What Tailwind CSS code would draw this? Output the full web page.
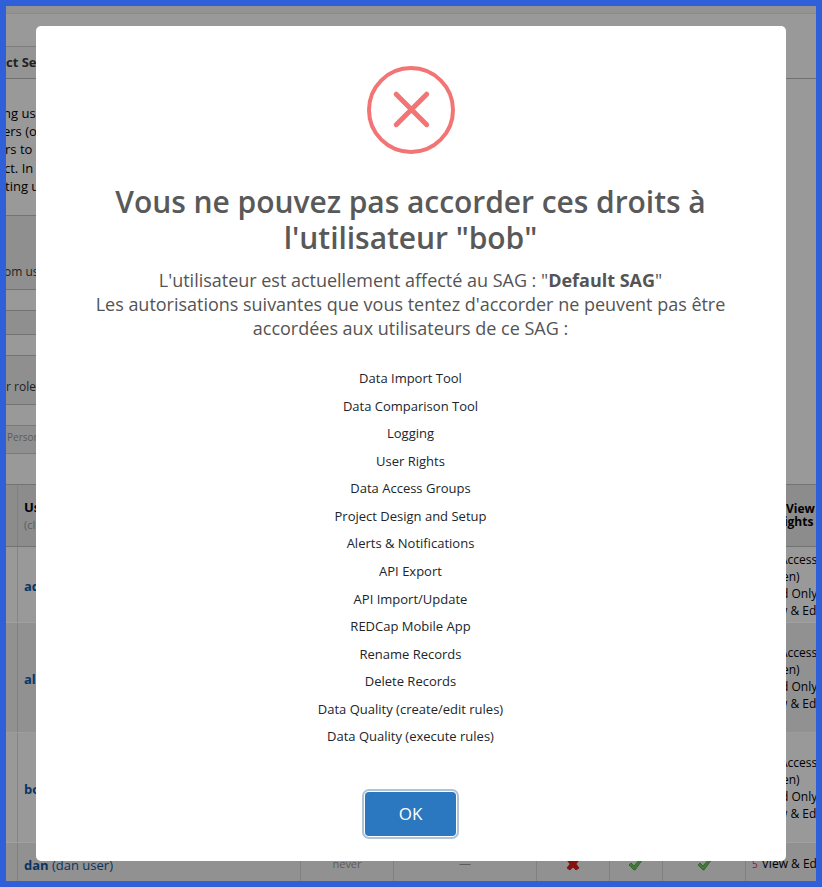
<!DOCTYPE html>
<html lang="fr">
<head>
<meta charset="utf-8">
<title>User Rights</title>
<script src="https://cdn.jsdelivr.net/npm/@tailwindcss/browser@4"></script>
</head>
<body>
<div class="relative h-[887px] w-[822px] overflow-hidden border-6 border-[#2f60d9] bg-[#999999] font-['Open_Sans',sans-serif] text-[13px] text-black">
  <!-- Page behind the dialog -->
  <div class="flex h-[875px] w-[810px] flex-col">
    <div class="h-2 shrink-0 border-b border-[#8b8b8b] bg-[#939393]"></div>
    <div class="flex h-[65px] shrink-0 items-end border-b border-[#707070]">
      <div class="flex h-8 w-40 items-center border-t border-[#7d7d7d] bg-[#949494] font-bold text-[#222]">ct Se</div>
    </div>
    <div class="h-[136px] shrink-0 pt-[25px] leading-[18.2px] whitespace-nowrap">
      <p class="-ml-[3px]">ng use</p><p class="-ml-[3px]">ers (o</p><p class="-ml-px">rs to a</p><p class="-ml-[2px]">ct. In</p><p class="-ml-px">ting u</p>
    </div>
    <div class="flex h-[75px] w-[700px] shrink-0 items-end border-y border-[#737373] bg-[#8f8f8f] pb-[9px] text-[12px] leading-4 text-[#222]"><span class="-ml-[2px]">om us</span></div>
    <div class="mt-5 h-[25px] w-[700px] shrink-0 border-y border-[#737373] bg-[#8f8f8f]"></div>
    <div class="mt-5 flex h-[50px] w-[700px] shrink-0 items-end border-y border-[#737373] bg-[#8f8f8f] pb-[9px] text-[12px] leading-4 text-[#222]">r role</div>
    <div class="mt-5 h-[29px] w-[700px] shrink-0 border-y border-[#7a7a7a] bg-[#8f8f8f] pt-[3px] pl-px text-[10px] leading-4 text-[#5c5c5c]">Person</div>
    <!-- User rights table -->
    <div class="mt-[30px] grid h-[63px] shrink-0 grid-cols-[12px_283px_93px_143px_73px_53px_83px_70px] border-y border-[#737373] bg-[#8c8c8c]">
      <div class="border-r border-[#808080]"></div>
      <div class="border-r border-[#808080] pt-[14px] pl-[6px] leading-[17px]"><b>Users</b><div class="text-[11px] text-[#5c5c5c]">(click</div></div>
      <div class="border-r border-[#808080]"></div><div class="border-r border-[#808080]"></div><div class="border-r border-[#808080]"></div><div class="border-r border-[#808080]"></div><div class="border-r border-[#808080]"></div>
      <div class="pt-[17px] text-[12px] leading-[13px] font-bold whitespace-nowrap"><div class="ml-[40px]">View</div><div class="ml-[30px]">Rights</div></div>
    </div>
    <div class="grid h-[76px] shrink-0 grid-cols-[12px_728px_70px] items-center border-b border-[#a0a0a0] bg-[#999999]">
      <div class="h-full border-r border-[#858585]"></div>
      <b class="pt-[5px] pl-[6px] text-[#0a3562]">ad</b>
      <div class="text-[12px] leading-[17px] whitespace-nowrap"><div class="ml-[34px]">Access</div><div class="ml-[36px]">en)</div><div class="ml-[35px]">d Only</div><div class="ml-[32px]">w &amp; Edit</div></div>
    </div>
    <div class="grid h-[110px] shrink-0 grid-cols-[12px_728px_70px] items-center border-b border-[#9c9c9c] bg-[#919191]">
      <div class="h-full border-r border-[#808080]"></div>
      <b class="pt-[4px] pl-[6px] text-[#0a3562]">al</b>
      <div class="text-[12px] leading-[17px] whitespace-nowrap"><div class="ml-[34px]">Access</div><div class="ml-[36px]">en)</div><div class="ml-[35px]">d Only</div><div class="ml-[32px]">w &amp; Edit</div></div>
    </div>
    <div class="grid h-[110px] shrink-0 grid-cols-[12px_728px_70px] items-center border-b border-[#a0a0a0] bg-[#999999]">
      <div class="h-full border-r border-[#858585]"></div>
      <b class="pt-[4px] pl-[6px] text-[#0a3562]">bob</b>
      <div class="text-[12px] leading-[17px] whitespace-nowrap"><div class="ml-[34px]">Access</div><div class="ml-[36px]">en)</div><div class="ml-[35px]">d Only</div><div class="ml-[32px]">w &amp; Edit</div></div>
    </div>
    <div class="grid h-[42px] shrink-0 grid-cols-[12px_283px_93px_143px_73px_136px_70px] bg-[#919191] *:border-r *:border-[#808080]">
      <div></div>
      <div class="pt-[13px] pl-[6px] text-[#0a3562]"><b>dan</b> (dan user)</div>
      <div class="pt-[13px] text-center text-[11px] text-[#5c5c5c]">never</div>
      <div class="pt-[12px] text-center text-[12px] text-[#5c5c5c]">—</div>
      <div class="flex justify-center pt-[13px]"><svg width="14" height="16" viewBox="0 0 14 16"><path d="M1 4l3-2 3 3 3-3 3 2-3 4 3 4-3 2-3-3-3 3-3-2 3-4z" fill="#8c0f0f" stroke="#641010" stroke-width=".7"/></svg></div>
      <div class="grid grid-cols-[53px_83px]">
        <div class="flex justify-center border-r border-[#808080] pt-[14px]"><svg width="16" height="14" viewBox="0 0 16 14"><path d="M1 8l2-2 3 3 7-8 2 1-8 11H6z" fill="#3f7a37" stroke="#285c24" stroke-width=".8"/></svg></div>
        <div class="flex justify-center pt-[14px]"><svg width="16" height="14" viewBox="0 0 16 14"><path d="M1 8l2-2 3 3 7-8 2 1-8 11H6z" fill="#3f7a37" stroke="#285c24" stroke-width=".8"/></svg></div>
      </div>
      <div class="flex items-baseline gap-1 border-r-0! pt-[12px] pl-[6px] text-[12px] whitespace-nowrap"><span class="text-[10px] text-[#8b1a4b]">5</span><span>View &amp; Edit</span></div>
    </div>
  </div>

  <!-- Dialog -->
  <div role="dialog" class="absolute top-[20px] left-[30px] flex h-[835px] w-[750px] flex-col items-center rounded-[5px] bg-white pt-10 text-center">
    <svg class="shrink-0" width="88" height="88" viewBox="0 0 88 88" fill="none" stroke="#f27474">
      <circle cx="44" cy="44" r="42" stroke-width="4"/>
      <path d="M29.2 28.2l30.5 30.5M59.7 28.2L29.2 58.7" stroke-width="5" stroke-linecap="round"/>
    </svg>
    <h2 class="mt-[30px] w-[640px] pr-px text-[30px] leading-9 font-semibold tracking-[-0.05px] text-[#595959]">Vous ne pouvez pas accorder ces droits à l'utilisateur "bob"</h2>
    <p class="mt-3 pr-px text-[18px] leading-6 tracking-[-0.015px] whitespace-nowrap text-[#545454]">L'utilisateur est actuellement affecté au SAG : "<b>Default SAG</b>"<br>Les autorisations suivantes que vous tentez d'accorder ne peuvent pas être<br>accordées aux utilisateurs de ce SAG :</p>
    <ul class="mt-[25px] pr-px text-[13px] leading-[27.56px] text-[#212529]">
      <li>Data Import Tool</li><li>Data Comparison Tool</li><li>Logging</li><li>User Rights</li><li>Data Access Groups</li><li>Project Design and Setup</li><li>Alerts &amp; Notifications</li><li>API Export</li><li>API Import/Update</li><li>REDCap Mobile App</li><li>Rename Records</li><li>Delete Records</li><li>Data Quality (create/edit rules)</li><li>Data Quality (execute rules)</li>
    </ul>
    <button class="mt-auto mr-px mb-[25px] h-11 w-[91px] rounded-[4px] bg-[#2b77c0] text-[17px] text-white shadow-[0_0_0_1px_#fff,0_0_0_3px_#afc3d8]">OK</button>
  </div>
</div>
</body>
</html>
